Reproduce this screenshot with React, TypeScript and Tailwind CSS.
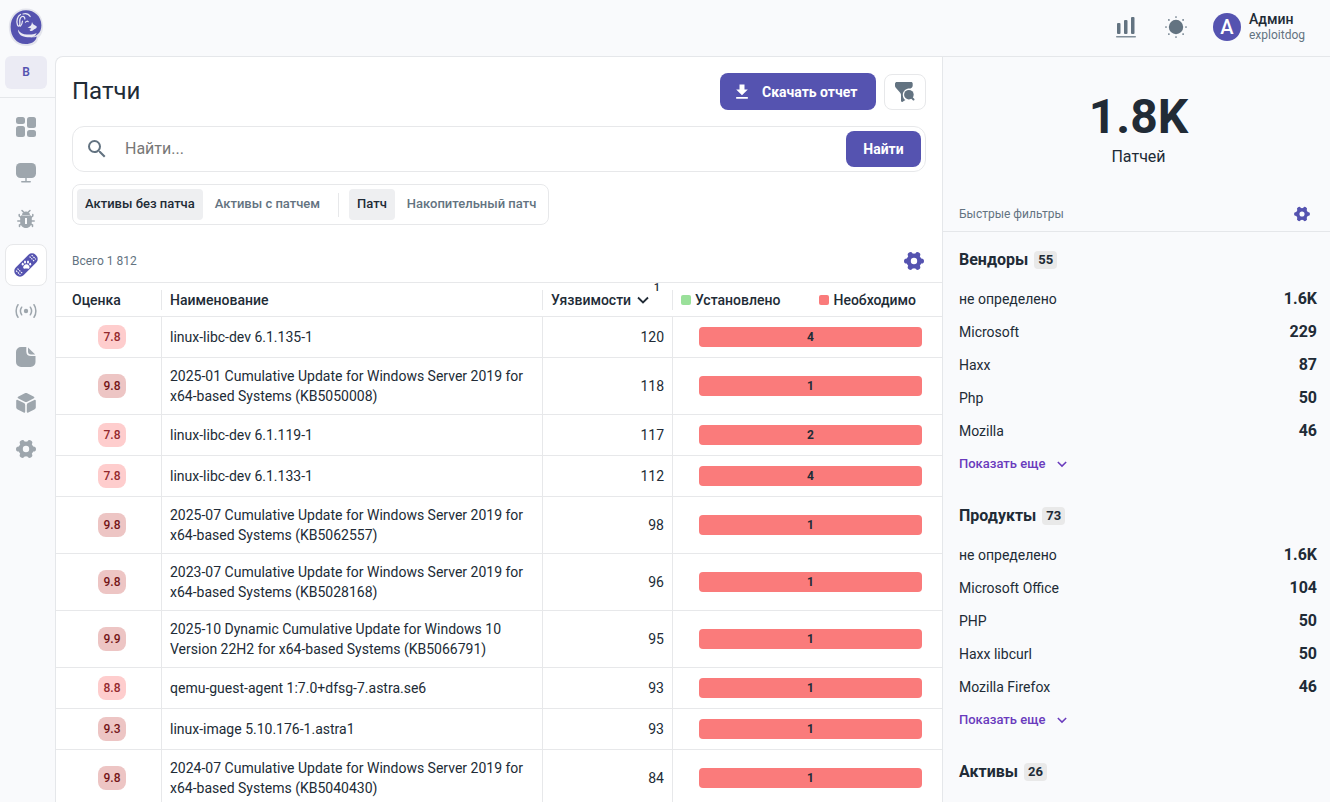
import { useState } from "react";
import type { ReactNode } from "react";

type Patch = { score: string; name: string; vulns: number; required: number };
type FilterItem = { name: string; value: string };
type FilterGroup = { title: string; count: number; items: FilterItem[] };

const patches: Patch[] = [
  { score: "7.8", name: "linux-libc-dev 6.1.135-1", vulns: 120, required: 4 },
  { score: "9.8", name: "2025-01 Cumulative Update for Windows Server 2019 for x64-based Systems (KB5050008)", vulns: 118, required: 1 },
  { score: "7.8", name: "linux-libc-dev 6.1.119-1", vulns: 117, required: 2 },
  { score: "7.8", name: "linux-libc-dev 6.1.133-1", vulns: 112, required: 4 },
  { score: "9.8", name: "2025-07 Cumulative Update for Windows Server 2019 for x64-based Systems (KB5062557)", vulns: 98, required: 1 },
  { score: "9.8", name: "2023-07 Cumulative Update for Windows Server 2019 for x64-based Systems (KB5028168)", vulns: 96, required: 1 },
  { score: "9.9", name: "2025-10 Dynamic Cumulative Update for Windows 10 Version 22H2 for x64-based Systems (KB5066791)", vulns: 95, required: 1 },
  { score: "8.8", name: "qemu-guest-agent 1:7.0+dfsg-7.astra.se6", vulns: 93, required: 1 },
  { score: "9.3", name: "linux-image 5.10.176-1.astra1", vulns: 93, required: 1 },
  { score: "9.8", name: "2024-07 Cumulative Update for Windows Server 2019 for x64-based Systems (KB5040430)", vulns: 84, required: 1 },
];

const filterGroups: FilterGroup[] = [
  {
    title: "Вендоры",
    count: 55,
    items: [
      { name: "не определено", value: "1.6K" },
      { name: "Microsoft", value: "229" },
      { name: "Haxx", value: "87" },
      { name: "Php", value: "50" },
      { name: "Mozilla", value: "46" },
    ],
  },
  {
    title: "Продукты",
    count: 73,
    items: [
      { name: "не определено", value: "1.6K" },
      { name: "Microsoft Office", value: "104" },
      { name: "PHP", value: "50" },
      { name: "Haxx libcurl", value: "50" },
      { name: "Mozilla Firefox", value: "46" },
    ],
  },
  { title: "Активы", count: 26, items: [] },
];

function Logo() {
  return (
    <svg viewBox="0 0 36 40" className="h-10 w-9" aria-hidden="true">
      <path d="M18 .5C8 .5.800 8.500.800 19S7 38 18 38c6.500 0 12-2.500 12-8 3-2 5-6 5-12C35 8 28 .5 18 .5Z" fill="#e3e4ec" />
      <path
        d="M18 2.300C9 2.300 2.600 9.500 2.600 19S8.500 36 17.500 36c5.500 0 10.800-2.500 11.200-7.500-2 .8-4 1-6.500.7 6-.7 11.200-4 11.200-12C33.400 8.500 26.500 2.300 18 2.300Z"
        fill="#5553b0"
      />
      <path d="M10 21.500c1.800 3.500 5 5 9 5 4.500.3 6.800-.3 9.700-1.600-1.300 3.700-5 4.800-9.200 4.300C14 29 10 26.500 10 21.500Z" fill="#e9e9f3" />
      <path d="M19.500 19.500c2.500-.7 4.300-2.200 4.500-5.500.8 2.200 1.800 3 4.600 4.200.4 1.500-.3 2.300-1.800 2.800-1.300.5-2 2-3.600 2.100-1 0-1.800-.8-1.500-1.600 1-.1 1.600-.6 1.500-1.100-1.300-.5-2.400-.2-3.700-.9Z" fill="#e9e9f3" />
      <g fill="none" stroke="#e9e9f3" strokeLinecap="round">
        <path d="M12.500 6.500C9.500 8 8 13 9.500 17c.4 1.300 1.800 1.500 2.200.2.600-2-.4-4 .3-6.200.3-1.200 1-2 2-2.500" strokeWidth="1.300" />
        <path d="M15 6c3-.8 5.700 0 7.200 2.500M14.500 8.500c1.500-.3 2.500 1 2.300 2.500" strokeWidth="1.200" />
        <path d="M17.500 14.200c.7-1.200 2-1.200 2.700-.5M14.500 13c-.2 2-1 4-2 5" strokeWidth="1.200" />
      </g>
    </svg>
  );
}

function GearIcon({ className }: { className: string }) {
  return (
    <svg viewBox="0 0 20 20" className={className} fill="none" stroke="currentColor" aria-hidden="true">
      <circle cx="10" cy="10" r="5.400" strokeWidth="4.400" />
      <path
        d="M16.500 10h.9M2.600 10h.9M13.250 4.400l.4-.7M6.350 16.300l.4-.7M6.750 4.400l-.4-.7M13.650 16.300l-.4-.7"
        strokeWidth="5.200"
        strokeLinecap="round"
      />
    </svg>
  );
}

function ChevronIcon({ className }: { className: string }) {
  return (
    <svg viewBox="0 0 12 12" className={className} fill="none" stroke="currentColor" aria-hidden="true">
      <path d="M1 3.500l5 5 5-5" strokeWidth="1.800" />
    </svg>
  );
}

function DashboardIcon() {
  return (
    <svg viewBox="0 0 20 20" className="size-5" fill="currentColor" aria-hidden="true">
      <rect x="0" y="0" width="9" height="7" rx="2.500" />
      <rect x="11" y="0" width="9" height="11" rx="2.500" />
      <rect x="0" y="9" width="9" height="11" rx="2.500" />
      <rect x="11" y="13" width="9" height="7" rx="2.500" />
    </svg>
  );
}

function MonitorIcon() {
  return (
    <svg viewBox="0 0 20 20" className="size-5" fill="currentColor" aria-hidden="true">
      <rect x="0" y="0" width="20" height="15" rx="4.500" />
      <path d="M9.300 15h1.400v3h3.500c1 0 1 1.500 0 1.500H5.800c-1 0-1-1.500 0-1.500h3.500Z" />
    </svg>
  );
}

function BugIcon() {
  return (
    <svg viewBox="0 0 20 20" className="size-5" aria-hidden="true">
      <g fill="none" stroke="currentColor" strokeWidth="1.500" strokeLinecap="round">
        <path d="M7.500 3 6 1.500M12.500 3 14 1.500M5 8.500 3.200 7V5.500M15 8.500 16.800 7V5.500M5 12H1.800M15 12h3.200M5.500 15l-2 1v1.500M14.500 15l2 1v1.500" />
      </g>
      <path
        fill="currentColor"
        fillRule="evenodd"
        d="M6 6.500C6 3.500 7.800 2.500 10 2.500s4 1 4 4ZM7 6h6c1.800 0 2.800 1.200 2.800 3v4c0 3.300-2.400 6-5.800 6s-5.800-2.700-5.800-6V9c0-1.800 1-3 2.800-3ZM9 9v6h2V9Z"
      />
    </svg>
  );
}

function BandageIcon() {
  return (
    <svg viewBox="0 0 26 26" className="size-[26px]" aria-hidden="true">
      <g transform="rotate(-45 13 13)">
        <rect x="-1" y="7.500" width="28" height="11" rx="5" fill="#5553b0" />
        <path d="M2 10v6M4.500 9.500v7M21.500 9.500v7M24 10v6" stroke="#fff" strokeWidth="1.100" strokeDasharray="1.600 .9" />
      </g>
      <g fill="#fff">
        <path d="M13.500 12.300c1.800 0 3.300 2 3 3.400-.4 1.500-1.900.8-3.200.8s-2.700.7-3.100-.7c-.3-1.500 1.500-3.500 3.300-3.500Z" />
        <ellipse cx="9.700" cy="12.200" rx="1" ry="1.400" />
        <ellipse cx="12" cy="9.900" rx="1" ry="1.500" />
        <ellipse cx="15" cy="9.900" rx="1" ry="1.500" />
        <ellipse cx="17.200" cy="12.200" rx="1" ry="1.400" />
      </g>
    </svg>
  );
}

function SignalIcon() {
  return (
    <svg viewBox="0 0 22 16" className="h-4 w-[22px]" fill="none" stroke="currentColor" strokeWidth="1.500" strokeLinecap="round" aria-hidden="true">
      <circle cx="11" cy="8" r="2.200" fill="currentColor" stroke="none" />
      <path d="M6.700 4.200c-1.500 2.200-1.500 5.400 0 7.600M15.300 4.200c1.500 2.200 1.500 5.400 0 7.600M3 1.700C.5 5.200.5 10.800 3 14.300M19 1.700c2.500 3.500 2.500 9.100 0 12.600" />
    </svg>
  );
}

function NoteIcon() {
  return (
    <svg viewBox="0 0 20 20" className="size-5" fill="currentColor" aria-hidden="true">
      <path d="M5 0h5.300v4.500C10.300 7.500 12 9 15 9h4.500v6a5 5 0 0 1-5 5H5a5 5 0 0 1-5-5V5a5 5 0 0 1 5-5Z" />
      <path d="M12 .5 19.200 7.500H15c-2 0-3-1-3-3Z" />
    </svg>
  );
}

function CubeIcon() {
  return (
    <svg viewBox="0 0 20 20" className="size-5" fill="currentColor" aria-hidden="true">
      <path d="M8.800.3c.8-.4 1.600-.4 2.400 0l6.300 3.200c1.200.7 1.200 1.400 0 2L11.200 8.800c-.8.4-1.600.4-2.400 0L2.500 5.500c-1.200-.6-1.200-1.300 0-2Z" />
      <path d="M.2 7.800c0-1 .7-1.300 1.500-.9L8 10.100c.8.400 1.200 1 1.200 1.900v6.700c0 1-.7 1.300-1.500.9l-6-3.100C.7 16 .2 15.300.2 14.300Z" />
      <path d="M19.800 7.800c0-1-.7-1.300-1.500-.9L12 10.100c-.8.400-1.200 1-1.200 1.900v6.700c0 1 .7 1.300 1.500.9l6-3.100c1-.5 1.500-1.200 1.500-2.200Z" />
    </svg>
  );
}

function ChartIcon() {
  return (
    <svg viewBox="0 0 20 22" className="h-[22px] w-5 text-[#637381]" fill="currentColor" aria-hidden="true">
      <rect x="1" y="7" width="3.500" height="11" rx="1" />
      <rect x="8" y="4" width="3.500" height="14" rx="1" />
      <rect x="15" y="1" width="3.500" height="17" rx="1" />
      <rect x="0" y="20" width="20" height="1.500" rx=".7" opacity=".8" />
    </svg>
  );
}

function SunIcon() {
  return (
    <svg viewBox="0 0 22 22" className="size-[22px] text-[#637381]" aria-hidden="true">
      <circle cx="11" cy="11" r="7.200" fill="currentColor" />
      <path
        d="M11 1v0M11 21v0M1 11v0M21 11v0M3.900 3.900v0M18.100 3.900v0M3.900 18.100v0M18.100 18.100v0"
        stroke="currentColor"
        strokeWidth="1.700"
        strokeLinecap="round"
      />
    </svg>
  );
}

function FilterSearchIcon() {
  return (
    <svg viewBox="0 0 24 24" className="size-6 text-[#637381]" fill="currentColor" aria-hidden="true">
      <path d="M4 2h14c1 0 1.700.7 1.700 1.700v2c0 .8-.4 1.500-1 2L17.500 8.600c-4-.6-7.700 2.300-7.700 6.300 0 2.200 1 4 2.600 5.100l-2.700 1.800c-.9.500-1.700 0-1.700-1v-6c0-.7-.4-1.500-.8-2L3 8c-.6-.6-1-1.400-1-2V3.700C2 2.700 3 2 4 2Z" />
      <circle cx="15.900" cy="14.700" r="4.800" />
      <path d="m18.500 17.500 2 2" stroke="currentColor" strokeWidth="2" strokeLinecap="round" />
    </svg>
  );
}

const navItems: { label: string; icon: ReactNode }[] = [
  { label: "Дашборд", icon: <DashboardIcon /> },
  { label: "Активы", icon: <MonitorIcon /> },
  { label: "Уязвимости", icon: <BugIcon /> },
  { label: "Патчи", icon: <BandageIcon /> },
  { label: "Сканирование", icon: <SignalIcon /> },
  { label: "Отчеты", icon: <NoteIcon /> },
  { label: "Пакеты", icon: <CubeIcon /> },
  { label: "Настройки", icon: <GearIcon className="size-5" /> },
];

function Sidebar() {
  return (
    <aside className="flex w-[55px] shrink-0 flex-col">
      <a href="#" aria-label="Главная" className="flex h-14 items-center pl-2">
        <Logo />
      </a>
      <div className="border-b border-[#e5e7ea] px-[5px] pb-2">
        <button className="h-[33px] w-[42px] rounded-md bg-[#ebebf4] pb-0.5 text-xs font-semibold text-[#5553b0]">B</button>
      </div>
      <nav className="flex flex-col gap-1 px-[5px] pt-2">
        {navItems.map((item) => (
          <a
            key={item.label}
            href="#"
            aria-label={item.label}
            className={`flex size-[42px] items-center justify-center rounded-lg text-[#9ea6ad] ${
              item.label === "Патчи" ? "border border-[#e7e8ea] bg-white" : ""
            }`}
          >
            {item.icon}
          </a>
        ))}
      </nav>
    </aside>
  );
}

function Header() {
  return (
    <header className="flex h-14 shrink-0 items-center justify-end pr-[21px] pb-0.5">
      <button aria-label="Статистика" className="mr-[29px]">
        <ChartIcon />
      </button>
      <button aria-label="Тема" className="mr-[26px]">
        <SunIcon />
      </button>
      <button className="flex items-center gap-2 text-left">
        <span className="flex size-7 items-center justify-center rounded-full bg-[#5553b0] text-xl font-medium text-white">A</span>
        <span className="min-w-[60px]">
          <span className="block text-sm/4 font-medium">Админ</span>
          <span className="block text-xs/4 text-[#637381]">exploitdog</span>
        </span>
      </button>
    </header>
  );
}

function ToggleButton({ label, active, onClick }: { label: string; active: boolean; onClick: () => void }) {
  return (
    <button
      onClick={onClick}
      className={`h-[31px] rounded px-2 pb-0.5 text-[13px] font-medium whitespace-nowrap ${
        active ? "bg-[#eeeff1] text-[#212b36]" : "text-[#637381]"
      }`}
    >
      {label}
    </button>
  );
}

function ScoreBadge({ score }: { score: string }) {
  const critical = Number(score) >= 9;
  return (
    <span
      className={`inline-flex h-6 w-7 items-center justify-center rounded-lg text-xs font-medium ${
        critical ? "bg-[#edc5c4] text-[#741518]" : "bg-[#fecdcd] text-[#93292e]"
      }`}
    >
      {score}
    </span>
  );
}

function PatchTable() {
  return (
    <table className="w-full table-fixed border-separate border-spacing-0 text-sm/5">
      <colgroup>
        <col className="w-[106px]" />
        <col />
        <col className="w-[130px]" />
        <col className="w-[269px]" />
      </colgroup>
      <thead>
        <tr className="h-[35px] text-left">
          <th className="border-y border-[#e7e8ea] p-0 font-medium">
            <div className="h-5 border-r border-[#e7e8ea] pl-4">Оценка</div>
          </th>
          <th className="border-y border-[#e7e8ea] p-0 font-medium">
            <div className="h-5 border-r border-[#e7e8ea] pl-2">Наименование</div>
          </th>
          <th className="border-y border-[#e7e8ea] p-0 font-medium">
            <div className="relative flex h-5 items-center gap-1.5 border-r border-[#e7e8ea] pl-2">
              Уязвимости
              <ChevronIcon className="size-3" />
              <span className="absolute -top-2.5 right-3 text-[11px]/4">1</span>
            </div>
          </th>
          <th className="border-y border-[#e7e8ea] p-0 font-medium">
            <div className="flex justify-between pr-[26px] pl-2">
              <span className="flex items-center gap-1">
                <i className="size-2.5 rounded-xs bg-[#9ae09a]" />
                Установлено
              </span>
              <span className="flex items-center gap-1">
                <i className="size-2.5 rounded-xs bg-[#fa7b7b]" />
                Необходимо
              </span>
            </div>
          </th>
        </tr>
      </thead>
      <tbody>
        {patches.map((patch) => (
          <tr key={patch.name}>
            <td className="border-r border-b border-[#e7e8ea] py-2">
              <div className="flex justify-center pl-[7px]">
                <ScoreBadge score={patch.score} />
              </div>
            </td>
            <td className="border-r border-b border-[#e7e8ea] p-2">{patch.name}</td>
            <td className="border-r border-b border-[#e7e8ea] p-2 text-right">{patch.vulns}</td>
            <td className="border-b border-[#e7e8ea] py-2 pr-5 pl-[26px]">
              <div className="h-5 rounded bg-[#fa7b7b] text-center text-xs/5 font-bold">{patch.required}</div>
            </td>
          </tr>
        ))}
      </tbody>
    </table>
  );
}

function PatchesPanel() {
  const [assets, setAssets] = useState("without");
  const [kind, setKind] = useState("patch");
  const [query, setQuery] = useState("");

  return (
    <main className="min-w-0 flex-1 overflow-hidden rounded-tl-lg border-t border-l border-[#e5e7ea] bg-white">
      <div className="px-4 pt-4">
        <div className="flex items-center gap-2">
          <h1 className="flex-1 pb-0.5 text-2xl">Патчи</h1>
          <button className="flex h-[37px] min-w-[156px] items-center gap-2.5 rounded-lg bg-[#5553b0] px-3 text-sm font-bold text-white">
            <svg viewBox="0 0 24 24" className="size-5" fill="currentColor" aria-hidden="true">
              <path d="M19 9h-4V3H9v6H5l7 7 7-7zM5 18v2h14v-2H5z" />
            </svg>
            Скачать отчет
          </button>
          <button aria-label="Фильтр" className="flex h-9 w-[42px] items-center justify-center rounded-lg border border-[#e7e8ea]">
            <FilterSearchIcon />
          </button>
        </div>

        <form
          onSubmit={(e) => e.preventDefault()}
          className="mt-4 flex h-[46px] items-center rounded-xl border border-[#e7e8ea] pr-1 pl-3"
        >
          <svg viewBox="0 0 24 24" className="size-6 text-[#637381]" fill="currentColor" aria-hidden="true">
            <path d="M15.500 14h-.79l-.28-.27A6.471 6.471 0 0 0 16 9.500 6.500 6.500 0 1 0 9.500 16c1.610 0 3.090-.59 4.230-1.570l.27.28v.79l5 4.990L20.490 19l-4.990-5zm-6 0C7.010 14 5 11.990 5 9.500S7.010 5 9.500 5 14 7.010 14 9.500 11.990 14 9.500 14z" />
          </svg>
          <input
            type="text"
            aria-label="Найти"
            placeholder="Найти..."
            value={query}
            onChange={(e) => setQuery(e.target.value)}
            className="min-w-0 flex-1 px-4 text-base outline-none placeholder:text-[#777777]"
          />
          <button type="submit" className="h-9 min-w-[75px] rounded-lg bg-[#5553b0] px-4 text-sm font-bold text-white">
            Найти
          </button>
        </form>

        <div className="mt-3 inline-flex h-[41px] items-center gap-1 rounded-lg border border-[#e7e8ea] px-1">
          <ToggleButton label="Активы без патча" active={assets === "without"} onClick={() => setAssets("without")} />
          <ToggleButton label="Активы с патчем" active={assets === "with"} onClick={() => setAssets("with")} />
          <span className="mx-1.5 h-6 w-px bg-[#e7e8ea]" />
          <ToggleButton label="Патч" active={kind === "patch"} onClick={() => setKind("patch")} />
          <ToggleButton label="Накопительный патч" active={kind === "rollup"} onClick={() => setKind("rollup")} />
        </div>

        <div className="mt-[14px] flex h-[43px] items-center justify-between text-xs text-[#637381]">
          <span>Всего 1 812</span>
          <button aria-label="Настройки таблицы" className="mr-0.5 text-[#5553b0]">
            <GearIcon className="size-5" />
          </button>
        </div>
      </div>
      <PatchTable />
    </main>
  );
}

function FiltersPanel() {
  return (
    <aside className="w-[388px] shrink-0 overflow-hidden border-t border-l border-[#e5e7ea]">
      <div className="flex flex-col items-center pt-9 pl-1">
        <span className="text-5xl font-bold">1.8K</span>
        <span className="mt-1 text-base">Патчей</span>
      </div>
      <div className="mt-7 flex h-[35px] items-center justify-between border-b border-[#e5e7ea] pr-5 pl-4 text-xs text-[#637381]">
        <span>Быстрые фильтры</span>
        <button aria-label="Настройки фильтров" className="text-[#5553b0]">
          <GearIcon className="size-4" />
        </button>
      </div>
      {filterGroups.map((group) => (
        <section key={group.title} className="pt-4 pr-[13px] pb-3.5 pl-4">
          <h2 className="flex h-6 items-center gap-1.5 text-base font-bold">
            {group.title}
            <span className="h-[18px] rounded bg-[#e9e9e9] px-1 text-[13px]/[18px] font-bold">{group.count}</span>
          </h2>
          {group.items.length > 0 && (
            <>
              <ul className="mt-2.5 text-sm">
                {group.items.map((item) => (
                  <li key={item.name} className="flex h-[33px] items-center justify-between">
                    <span>{item.name}</span>
                    <b className="text-base font-bold">{item.value}</b>
                  </li>
                ))}
              </ul>
              <button className="mt-1.5 flex h-[21px] items-center gap-3 text-[13px] font-medium text-[#6a3bbd]">
                Показать еще
                <ChevronIcon className="size-2.5" />
              </button>
            </>
          )}
        </section>
      ))}
    </aside>
  );
}

export default function App() {
  return (
    <div className="flex h-screen overflow-hidden bg-[#f9fafc] font-['Roboto',sans-serif] text-[#212b36]">
      <Sidebar />
      <div className="flex min-w-0 flex-1 flex-col">
        <Header />
        <div className="flex min-h-0 flex-1">
          <PatchesPanel />
          <FiltersPanel />
        </div>
      </div>
    </div>
  );
}
